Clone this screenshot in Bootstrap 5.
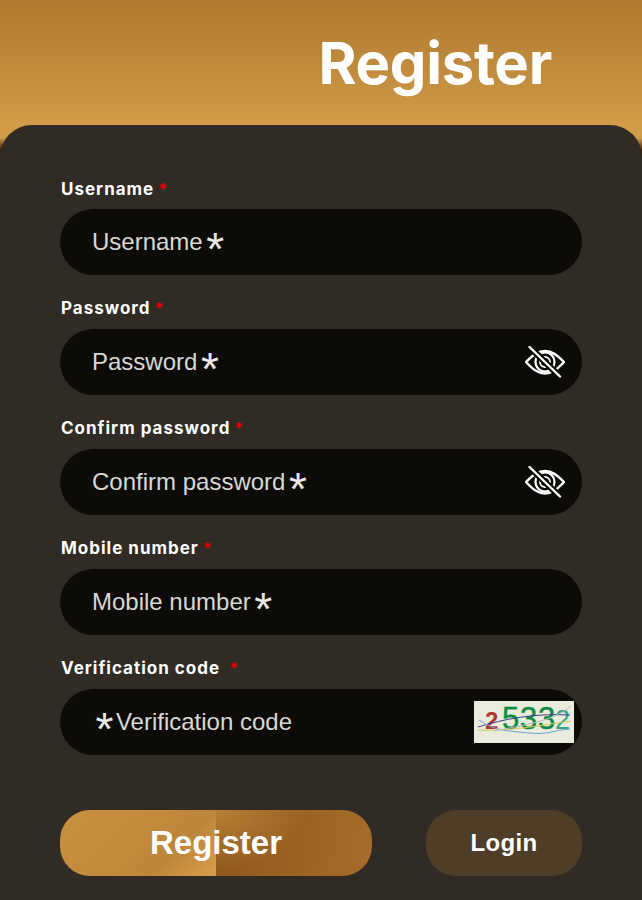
<!DOCTYPE html>
<html lang="en">
<head>
<meta charset="utf-8">
<title>Register</title>
<link href="https://cdn.jsdelivr.net/npm/bootstrap@5.3.0/dist/css/bootstrap.min.css" rel="stylesheet">
<style>
html,body{height:100%;}
body{background:#4a2a12;font-family:"Liberation Sans",sans-serif;overflow:hidden;}
.page-shell{height:900px;display:flex;flex-direction:column;}
.hero-band{height:165px;margin-bottom:-40px;flex:none;background:linear-gradient(180deg,#ae7830 0,#d19b49 125px,#d19b49 138px,#3a1f0c 150px);padding:32px 90px 0 0;display:flex;justify-content:flex-end;}
.hero-title{font-family:"Inter","Roboto",sans-serif;font-size:58px;font-weight:700;line-height:62px;color:#fff;margin:0;letter-spacing:-.25px;}
.form-panel{flex:1;background:#302b24;border-radius:32px 32px 0 0;padding:52px 60px 0;}
.field-block{height:120px;}
.field-label{display:block;font-family:"Inter","Roboto",sans-serif;font-size:17px;font-weight:700;line-height:22px;color:#fff;letter-spacing:1px;margin:0 0 10px 1px;}
.field-block:first-child .field-label{padding-top:1px;margin-bottom:9px;}
.req{color:#e80000;font-size:16px;line-height:1;margin-left:4px;}
.field-shell{height:66px;background:#0c0b07;border-radius:33px;display:flex;align-items:center;padding:0 17px 0 32px;}
.hint-text{flex:none;margin:0;font-size:24px;line-height:1;color:#d8d8d6;white-space:nowrap;}
.hint-star{font-size:46px;line-height:0;vertical-align:-14.5px;color:#e8e8e6;margin:0 2.5px 0 3.5px;}
.field-input{flex:1;min-width:0;background:transparent;border:0;outline:0;padding:0;font-family:"Liberation Sans",sans-serif;font-size:24px;color:#ddd;box-shadow:none;}
.captcha-box{width:100px;height:42px;margin-right:-9px;flex:none;display:block;}
.actions-row{display:flex;justify-content:space-between;margin-top:15px;padding-top:18px;}
.btn-main,.btn-alt{height:66px;border:0;border-radius:30px;color:#fff;font-weight:700;padding:0;font-family:"Liberation Sans",sans-serif;}
.btn-main{width:312px;font-size:33px;background:radial-gradient(ellipse 90px 60px at 0 0,rgba(196,142,66,.75),rgba(196,142,66,0)) right/50% 100% no-repeat,linear-gradient(135deg,#c98f40,#c48a3c 45%,#bd853b 70%,#db9f4b) left/50% 100% no-repeat,linear-gradient(100deg,#8f581b,#a66d29) right/50% 100% no-repeat;}
.btn-alt{width:156px;font-size:24px;letter-spacing:.3px;background:#4e3d27;}
.btn-main:hover,.btn-alt:hover{color:#fff;}
.eye-mark{flex:none;display:block;}
</style>
</head>
<body>
<div class="page-shell">
  <header class="hero-band"><h1 class="hero-title">Register</h1></header>
  <form class="form-panel">
    <div class="field-block">
      <label class="field-label" for="f1">Username<span class="req">*</span></label>
      <div class="field-shell"><label class="hint-text" for="f1">Username<span class="hint-star">*</span></label><input class="field-input" id="f1"></div>
    </div>
    <div class="field-block">
      <label class="field-label" for="f2">Password<span class="req">*</span></label>
      <div class="field-shell"><label class="hint-text" for="f2">Password<span class="hint-star">*</span></label><input class="field-input" id="f2" type="password">
        <svg class="eye-mark" width="40" height="32" viewBox="0 0 40 32" fill="none" stroke="#fff" stroke-linecap="round" stroke-linejoin="round"><path stroke-width="2.4" d="M1 16C8 8.500 13 5 20 5S32 8.500 39 16C32 23.500 27 27.500 20 27.500S8 23.500 1 16Z"/><circle cx="20" cy="16" r="9.500" stroke-width="2.2"/><circle cx="20" cy="16" r="5" stroke-width="1.800"/><path stroke="#0c0b07" stroke-width="6.500" d="M4.500 1 35 30.500"/><path stroke-width="2.400" d="M4.500 1 35 30.500"/></svg>
      </div>
    </div>
    <div class="field-block">
      <label class="field-label" for="f3">Confirm password<span class="req">*</span></label>
      <div class="field-shell"><label class="hint-text" for="f3">Confirm password<span class="hint-star">*</span></label><input class="field-input" id="f3" type="password">
        <svg class="eye-mark" width="40" height="32" viewBox="0 0 40 32" fill="none" stroke="#fff" stroke-linecap="round" stroke-linejoin="round"><path stroke-width="2.4" d="M1 16C8 8.500 13 5 20 5S32 8.500 39 16C32 23.500 27 27.500 20 27.500S8 23.500 1 16Z"/><circle cx="20" cy="16" r="9.500" stroke-width="2.2"/><circle cx="20" cy="16" r="5" stroke-width="1.800"/><path stroke="#0c0b07" stroke-width="6.500" d="M4.500 1 35 30.500"/><path stroke-width="2.400" d="M4.500 1 35 30.500"/></svg>
      </div>
    </div>
    <div class="field-block">
      <label class="field-label" for="f4">Mobile number<span class="req">*</span></label>
      <div class="field-shell"><label class="hint-text" for="f4">Mobile number<span class="hint-star">*</span></label><input class="field-input" id="f4"></div>
    </div>
    <div class="field-block">
      <label class="field-label" for="f5">Verification code&nbsp;<span class="req">*</span></label>
      <div class="field-shell"><label class="hint-text" for="f5"><span class="hint-star">*</span>Verification code</label><input class="field-input" id="f5">
        <svg class="captcha-box" viewBox="0 0 100 42"><rect width="100" height="42" fill="#e9ebdc"/><text x="11" y="28" font-family="Liberation Sans" font-weight="700" font-size="24" fill="#b5362a">2</text><text x="28" y="28" font-family="Liberation Sans" font-size="31" stroke="#0c8a3e" stroke-width=".4" fill="#0c8a3e">5</text><text x="46" y="28" font-family="Liberation Sans" font-size="31" stroke="#0c8a3e" stroke-width=".4" fill="#0c8a3e">3</text><text x="64" y="28" font-family="Liberation Sans" font-size="31" stroke="#0c8a3e" stroke-width=".4" fill="#0c8a3e">3</text><text x="81" y="28" font-family="Liberation Sans" font-size="27" fill="#2fa88a">2</text><g fill="none" stroke-width="1"><path d="M4 26C30 18 60 12 96 14" stroke="#3b3f95"/><path d="M5 19C20 30 35 30 55 32S80 29 96 28" stroke="#6fa3d8"/><path d="M4 29C30 31 70 24 97 20" stroke="#d8c763"/><path d="M20 30C50 24 80 20 97 5" stroke="#b8b8b8"/></g></svg>
      </div>
    </div>
    <div class="actions-row">
      <button type="button" class="btn btn-main">Register</button>
      <button type="button" class="btn btn-alt">Login</button>
    </div>
  </form>
</div>
<script src="https://cdn.jsdelivr.net/npm/bootstrap@5.3.0/dist/js/bootstrap.bundle.min.js"></script>
</body>
</html>
